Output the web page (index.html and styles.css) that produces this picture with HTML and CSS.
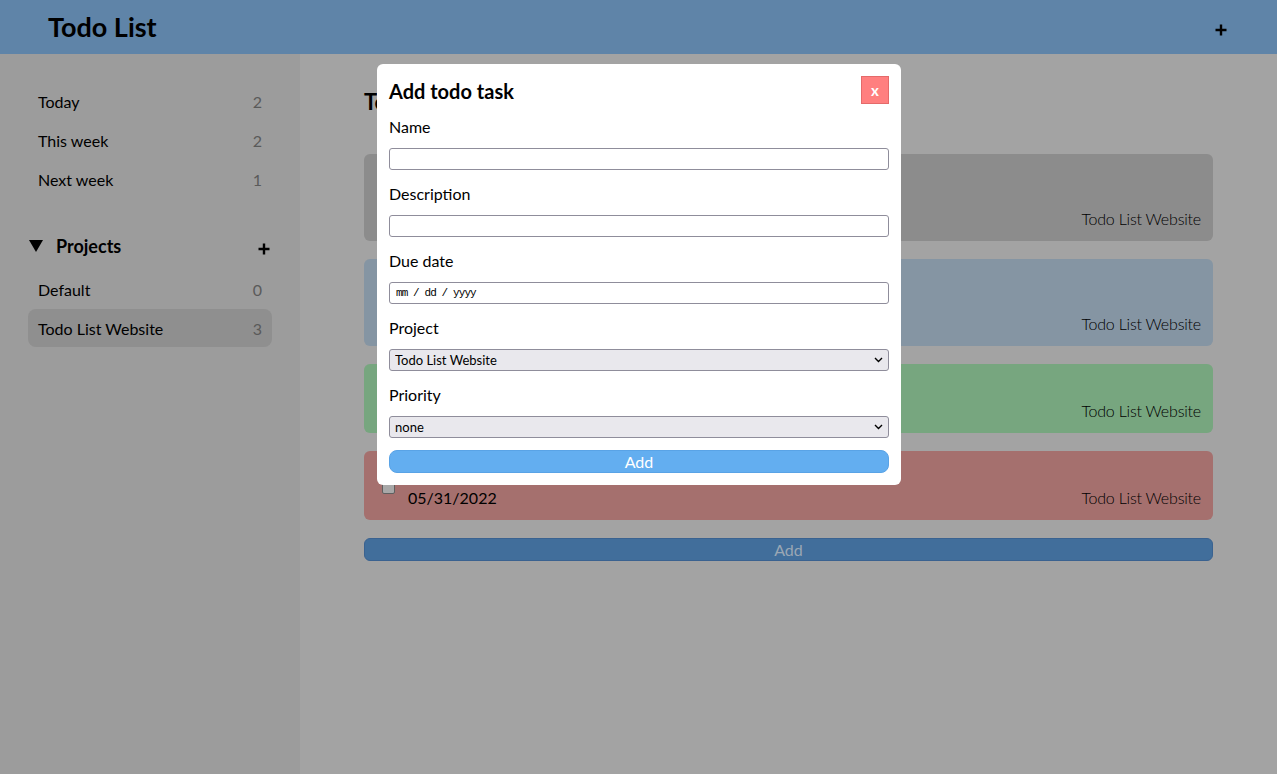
FILE: index.html
```html
<!DOCTYPE html>
<html lang="en">
<head>
<meta charset="utf-8">
<title>Todo List</title>
<link rel="stylesheet" href="styles.css">
</head>
<body>
<div class="app">
  <header class="topbar">
    <h1 class="brand">Todo List</h1>
    <button class="icon-btn top-add" aria-label="Add task">
      <svg width="12" height="12" viewBox="0 0 12 12"><path d="M6 0.5V11.5M0.5 6H11.5" stroke="#000" stroke-width="2.4" fill="none"/></svg>
    </button>
  </header>
  <div class="body">
    <aside class="sidebar">
      <ul class="nav">
        <li class="nav-item"><span>Today</span><span class="count">2</span></li>
        <li class="nav-item"><span>This week</span><span class="count">2</span></li>
        <li class="nav-item"><span>Next week</span><span class="count">1</span></li>
      </ul>
      <div class="projects-head">
        <div class="projects-title">
          <svg class="caret" width="14" height="12" viewBox="0 0 14 12"><path d="M0 0H14L7 12Z" fill="#000"/></svg>
          <span>Projects</span>
        </div>
        <svg class="proj-add" width="12" height="12" viewBox="0 0 12 12"><path d="M6 0.5V11.5M0.5 6H11.5" stroke="#000" stroke-width="2.4" fill="none"/></svg>
      </div>
      <ul class="nav">
        <li class="nav-item"><span>Default</span><span class="count">0</span></li>
        <li class="nav-item active"><span>Todo List Website</span><span class="count">3</span></li>
      </ul>
    </aside>
    <main class="main">
      <h2 class="page-title">Todo List Website</h2>
      <div class="cards">
        <div class="card c-none">
          <div class="card-top">
            <span class="check"></span>
            <div class="card-text">
              <div class="card-name">Create sidebar</div>
              <div class="card-desc">List projects and filters</div>
              <div class="card-date">05/28/2022</div>
            </div>
          </div>
          <div class="card-project">Todo List Website</div>
        </div>
        <div class="card c-low">
          <div class="card-top">
            <span class="check"></span>
            <div class="card-text">
              <div class="card-name">Style cards</div>
              <div class="card-desc">Colours for each priority</div>
              <div class="card-date">05/29/2022</div>
            </div>
          </div>
          <div class="card-project">Todo List Website</div>
        </div>
        <div class="card c-med">
          <div class="card-top">
            <span class="check"></span>
            <div class="card-text">
              <div class="card-name">Local storage</div>
              <div class="card-date">05/30/2022</div>
            </div>
          </div>
          <div class="card-project">Todo List Website</div>
        </div>
        <div class="card c-high">
          <div class="card-top">
            <span class="check"></span>
            <div class="card-text">
              <div class="card-name">Deploy website</div>
              <div class="card-date">05/31/2022</div>
            </div>
          </div>
          <div class="card-project">Todo List Website</div>
        </div>
        <button class="main-add">Add</button>
      </div>
    </main>
  </div>

  <div class="modal">
    <div class="modal-head">
      <h3 class="modal-title">Add todo task</h3>
      <button class="close-btn">x</button>
    </div>
    <form class="form">
      <label class="field"><span class="label">Name</span><input class="input" type="text"></label>
      <label class="field"><span class="label">Description</span><input class="input" type="text"></label>
      <label class="field"><span class="label">Due date</span><input class="input date" type="text" value="mm / dd / yyyy" spellcheck="false"></label>
      <label class="field"><span class="label">Project</span>
        <span class="select-wrap">
          <select class="select"><option>Todo List Website</option><option>Default</option></select>
          <svg class="chev" width="9" height="6" viewBox="0 0 9 6"><path d="M1 1L4.5 4.5L8 1" stroke="#000" stroke-width="1.4" fill="none"/></svg>
        </span>
      </label>
      <label class="field"><span class="label">Priority</span>
        <span class="select-wrap">
          <select class="select"><option>none</option><option>low</option><option>medium</option><option>high</option></select>
          <svg class="chev" width="9" height="6" viewBox="0 0 9 6"><path d="M1 1L4.5 4.5L8 1" stroke="#000" stroke-width="1.4" fill="none"/></svg>
        </span>
      </label>
      <button class="submit" type="button">Add</button>
    </form>
  </div>
</div>
</body>
</html>
```
FILE: styles.css
```css
* { box-sizing: border-box; }
html, body { margin: 0; padding: 0; }
body {
  font-family: "Lato", "Noto Sans", sans-serif;
  font-size: 16px;
  color: #000;
  background: #a3a3a3;
}
.app {
  height: 774px;
  display: flex;
  flex-direction: column;
}
.topbar {
  height: 54px;
  flex: none;
  background: #5f84a8;
  display: flex;
  align-items: center;
  justify-content: space-between;
  padding: 0 50px 0 48px;
}
.brand {
  margin: 0;
  font-size: 27px;
  font-weight: 700;
  line-height: 1;
  margin-top: -1px;
}
.icon-btn {
  background: none;
  border: 0;
  padding: 0;
  display: flex;
  margin-top: 6px;
}
.body {
  flex: 1;
  display: flex;
}
.sidebar {
  width: 300px;
  flex: none;
  background: #9c9c9c;
  padding: 28px 28px;
}
.nav {
  list-style: none;
  margin: 0;
  padding: 0;
  display: flex;
  flex-direction: column;
  gap: 1px;
}
.nav-item {
  height: 38px;
  display: flex;
  align-items: center;
  justify-content: space-between;
  padding: 0 10px;
  border-radius: 8px;
}
.nav-item.active { background: #8f8f8f; }
.count { color: #5a5a5a; }
.projects-head {
  height: 38px;
  margin-top: 29px;
  margin-bottom: 5px;
  display: flex;
  align-items: center;
  justify-content: space-between;
  padding: 0 2px 0 1px;
}
.projects-title {
  display: flex;
  align-items: center;
  gap: 13px;
  font-size: 18px;
  font-weight: 700;
}
.proj-add { margin-top: 5px; }
.main {
  flex: 1;
  padding: 30px 64px 0 64px;
}
.page-title {
  margin: 0;
  font-size: 22px;
  line-height: 36px;
  font-weight: 700;
  height: 70px;
}
.cards {
  display: flex;
  flex-direction: column;
  gap: 18px;
}
.card {
  border-radius: 6px;
  padding: 14px 12px 11px 18px;
  display: flex;
  justify-content: space-between;
  align-items: flex-end;
}
.c-none { background: #8c8c8c; }
.c-low { background: #8595a3; }
.c-med { background: #77a67f; }
.c-high { background: #a5706e; }
.card-top {
  display: flex;
  align-items: center;
  gap: 13px;
}
.check {
  width: 13px;
  height: 13px;
  border: 1px solid #5f5f5f;
  border-radius: 2px;
  background: #a8a8a8;
}
.card-text { line-height: 22px; }
.card-name { font-weight: 700; }
.card-desc { line-height: 18px; font-size: 14px; }
.card-project { line-height: 22px; font-weight: 300; letter-spacing: -0.2px; }
.main-add {
  height: 23px;
  border: 1px solid #3a6290;
  background: #416e9b;
  border-radius: 6px;
  color: #9aa7b4;
  font: inherit;
  font-size: 16px;
  line-height: 20px;
  padding: 0;
}
.modal {
  position: absolute;
  left: 377px;
  top: 64px;
  width: 524px;
  background: #fff;
  border-radius: 6px;
  padding: 12px;
}
.modal-head {
  display: flex;
  align-items: center;
  justify-content: space-between;
  height: 28px;
}
.modal-title {
  margin: 0;
  font-size: 20px;
  font-weight: 700;
  margin-top: 2px;
}
.close-btn {
  width: 28px;
  height: 28px;
  border: 1px solid #e46a6a;
  background: #ff7f7f;
  color: #fff;
  font: inherit;
  font-weight: 700;
  font-size: 15px;
  line-height: 24px;
  padding: 0;
}
.form {
  margin-top: 11px;
  display: flex;
  flex-direction: column;
  gap: 12px;
}
.field {
  display: flex;
  flex-direction: column;
  gap: 11px;
}
.label { line-height: 22px; padding-top: 1px; height: 22px; }
.input, .select {
  height: 22px;
  width: 100%;
  border: 1px solid #8f8d9b;
  border-radius: 3px;
  background: #fff;
  margin: 0;
  font-family: "Lato", "Noto Sans", sans-serif;
  outline: none;
}
.input.date {
  font-family: "Liberation Mono", monospace;
  font-size: 11px;
  letter-spacing: -0.9px;
  padding: 0 6px;
  color: #000;
}
.select-wrap {
  position: relative;
  display: block;
}
.select {
  appearance: none;
  -webkit-appearance: none;
  background: #e9e8ed;
  font-size: 13px;
  padding: 0 5px;
  color: #000;
}
.chev {
  position: absolute;
  right: 6px;
  top: 8px;
  pointer-events: none;
}
.submit {
  height: 23px;
  border: 1px solid #59a3e6;
  background: #63aef0;
  border-radius: 8px;
  color: #fff;
  font: inherit;
  font-size: 16px;
  line-height: 20px;
  padding: 0;
}
```
